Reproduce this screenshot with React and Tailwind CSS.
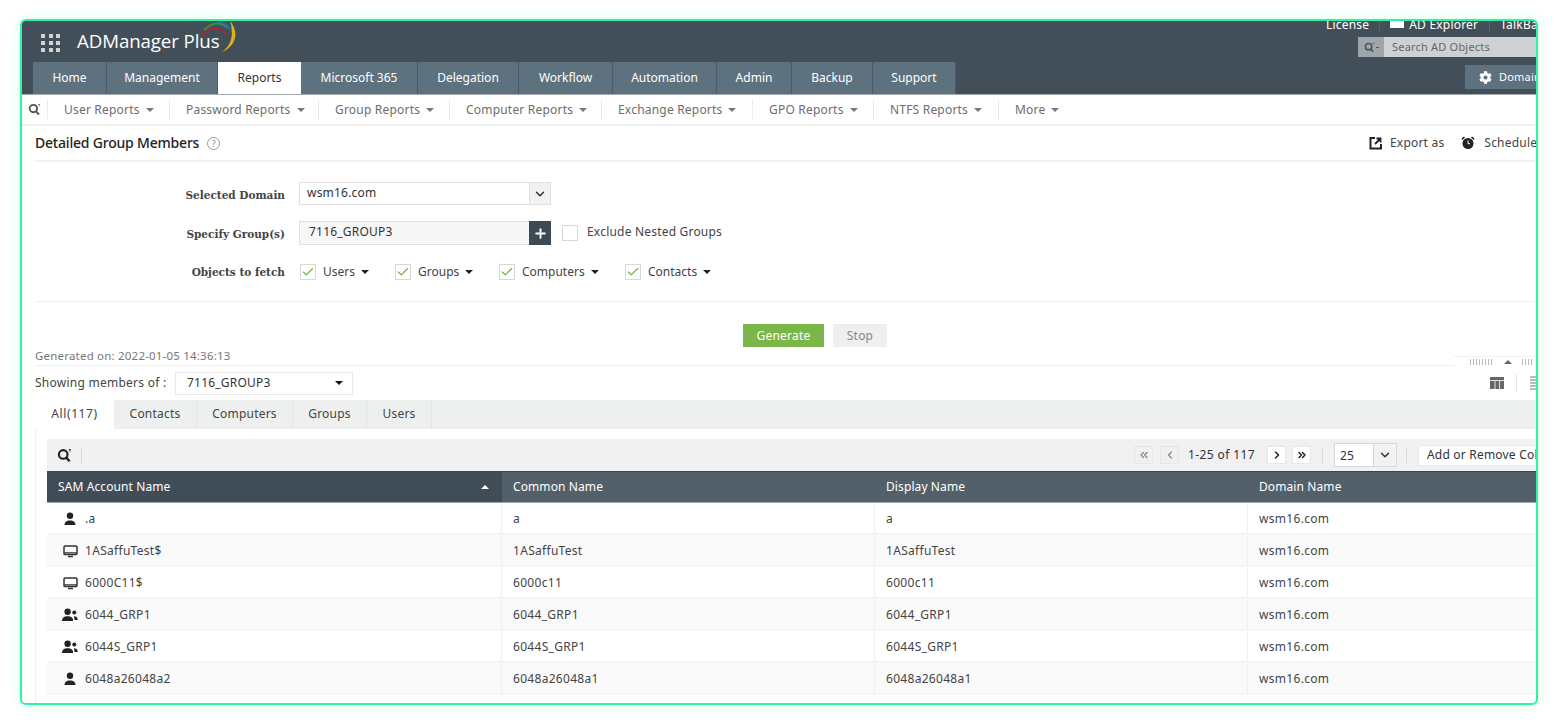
import { ChevronDown, ChevronLeft, ChevronRight, ChevronsLeft, ChevronsRight, Plus, Check } from "lucide-react";
import { FaCog } from "react-icons/fa";

const tabs = [
  { label: "Home", w: "w-[74px]" },
  { label: "Management", w: "w-[111px]" },
  { label: "Reports", w: "w-[83px]", active: true },
  { label: "Microsoft 365", w: "w-[117px]" },
  { label: "Delegation", w: "w-[101px]" },
  { label: "Workflow", w: "w-[94px]" },
  { label: "Automation", w: "w-[104px]" },
  { label: "Admin", w: "w-[75px]" },
  { label: "Backup", w: "w-[81px]" },
  { label: "Support", w: "w-[83px]" },
];

const subNav = [
  { label: "User Reports", w: "w-[122px]" },
  { label: "Password Reports", w: "w-[149px]" },
  { label: "Group Reports", w: "w-[131px]" },
  { label: "Computer Reports", w: "w-[152px]" },
  { label: "Exchange Reports", w: "w-[151px]" },
  { label: "GPO Reports", w: "w-[121px]" },
  { label: "NTFS Reports", w: "w-[125px]" },
  { label: "More", w: "w-[80px]" },
];

const fetchObjects = [
  { label: "Users", w: "w-[95px]" },
  { label: "Groups", w: "w-[104px]" },
  { label: "Computers", w: "w-[126px]" },
  { label: "Contacts", w: "w-[100px]" },
];

const resultTabs = [
  { label: "All(117)", w: "w-[79px]", active: true },
  { label: "Contacts", w: "w-[83px]" },
  { label: "Computers", w: "w-[96px]" },
  { label: "Groups", w: "w-[74px]" },
  { label: "Users", w: "w-[65px]" },
];

const rows = [
  { type: "user", sam: ".a", common: "a", display: "a" },
  { type: "pc", sam: "1ASaffuTest$", common: "1ASaffuTest", display: "1ASaffuTest" },
  { type: "pc", sam: "6000C11$", common: "6000c11", display: "6000c11" },
  { type: "group", sam: "6044_GRP1", common: "6044_GRP1", display: "6044_GRP1" },
  { type: "group", sam: "6044S_GRP1", common: "6044S_GRP1", display: "6044S_GRP1" },
  { type: "user", sam: "6048a26048a2", common: "6048a26048a1", display: "6048a26048a1" },
];

function Caret({ className = "" }) {
  return <span className={`inline-block w-0 h-0 border-x-[4px] border-x-transparent border-t-[4px] ${className}`} />;
}

function SearchIcon({ size = 14, color = "#333" }) {
  return (
    <svg className="shrink-0" width={size} height={size} viewBox="0 0 14 14" fill="none">
      <circle cx="5.8" cy="6" r="4" stroke={color} strokeWidth="2" />
      <path d="M8.6 9l3.2 3.4" stroke={color} strokeWidth="2.2" />
      <path d="M11 1.5h2M12 1.5v2" stroke={color} strokeWidth="0.8" />
    </svg>
  );
}

function RowIcon({ type }) {
  if (type === "user") {
    return (
      <svg width="14" height="14" viewBox="0 0 14 14" fill="#222">
        <circle cx="7" cy="3.8" r="3.2" />
        <path d="M1.500 13c0-3.400 2.500-4.600 5.500-4.600s5.500 1.200 5.500 4.600z" />
      </svg>
    );
  }
  if (type === "pc") {
    return (
      <svg width="15" height="14" viewBox="0 0 15 14" fill="none" stroke="#333">
        <rect x="1" y="2" width="13" height="8.600" rx="1.200" strokeWidth="1.500" />
        <path d="M1 8.800h13" strokeWidth="1.200" />
        <path d="M5 12.500h5" strokeWidth="1.400" />
      </svg>
    );
  }
  return (
    <svg width="16" height="14" viewBox="0 0 16 14" fill="#222">
      <circle cx="5.600" cy="3.800" r="3.200" />
      <path d="M0 13c0-3.400 2.500-4.700 5.600-4.700s5.600 1.300 5.600 4.700z" />
      <circle cx="12.300" cy="4.600" r="2" />
      <path d="M11.800 8.300c2.200 0 4 1 4 3.700h-3.300c0-1.400-.2-2.700-.7-3.700z" />
    </svg>
  );
}

function CheckBox({ checked }) {
  return (
    <span className="flex items-center justify-center w-[16px] h-[16px] shrink-0 bg-white border border-[#d8d8d8]">
      {checked && <Check size={14} strokeWidth={2} className="text-[#6db33f]" />}
    </span>
  );
}

function PageBtn({ children, dim }) {
  return (
    <span className={`flex items-center justify-center w-[19px] h-[18px] shrink-0 border border-[#e6e6e6] ${dim ? "bg-[#f0f0f0] text-[#888]" : "bg-white text-[#222]"}`}>
      {children}
    </span>
  );
}

function Cell({ children, w }) {
  return <div className={`${w} shrink-0 flex items-center px-[11px] border-r border-[#efefef]`}>{children}</div>;
}

export default function App() {
  return (
    <div className="w-[1557px] h-[724px] bg-white pl-[20px] pt-[19px] font-['Noto_Sans',sans-serif] text-[12px] tracking-[0.2px] text-[#444] overflow-hidden">
      <div className="w-[1518px] h-[686px] flex flex-col bg-white border-2 border-[#2ef3a0] rounded-[6px] overflow-hidden shadow-[0_0_14px_rgba(46,243,160,0.18)]">
        {/* dark header */}
        <header className="h-[74px] shrink-0 flex justify-between bg-[#434f58] border-b border-[#a3a9ad]">
          <div className="flex flex-col">
            <div className="h-[41px] flex items-center pl-[19px] pt-[2px]">
              <div className="grid grid-cols-3 gap-[3px] w-[20px]">
                {[0, 1, 2, 3, 4, 5, 6, 7, 8].map((i) => (
                  <span key={i} className="w-[4px] h-[4px] bg-[#cfd4d6]" />
                ))}
              </div>
              <div className="relative ml-[16px]">
                <span className="text-[18.700px] leading-none font-medium text-white font-['Open_Sans',sans-serif] tracking-[-0.1px]">ADManager Plus</span>
                <svg className="absolute left-[125px] top-[-11px]" width="36" height="34" viewBox="0 0 36 34" fill="none">
                  <path d="M1 14Q12 1 25 13" stroke="#a8233a" strokeWidth="2" />
                  <path d="M2 9Q14 -3 26 7" stroke="#3d8f3d" strokeWidth="2" />
                  <path d="M16 1Q25 1 30 11" stroke="#2569b0" strokeWidth="2" />
                  <path d="M28 0C37 10 35 25 20 31C30 24 32 12 28 0z" fill="#e0b010" />
                </svg>
              </div>
            </div>
            <nav className="flex pl-[11px] h-[32px] tracking-normal">
              {tabs.map((t) => (
                <div
                  key={t.label}
                  className={`${t.w} flex items-center justify-center ${t.active ? "bg-white text-[#333]" : "bg-[#5d717f] text-white border-r border-[#4b5c68]"}`}
                >
                  {t.label}
                </div>
              ))}
            </nav>
          </div>
          <div className="w-[210px] flex flex-col items-end overflow-hidden">
            <div className="h-[7px] w-full shrink-0 flex items-center text-[12px] leading-none text-white whitespace-nowrap">
              <span>License</span>
              <span className="w-px h-[14px] shrink-0 bg-[#566269] ml-[10px] mr-[10px]" />
              <span className="w-[14px] h-[7px] shrink-0 bg-white mr-[5px]" />
              <span>AD Explorer</span>
              <span className="w-px h-[14px] shrink-0 bg-[#566269] ml-[11px] mr-[10px]" />
              <span>TalkBack</span>
            </div>
            <div className="mt-[9px] w-[178px] h-[20px] shrink-0 flex bg-[#cdd1d3]">
              <div className="w-[26px] flex items-center justify-center gap-px bg-[#9ea6ab]">
                <SearchIcon size={11} color="#4b565d" />
                <span className="w-[3px] h-px bg-[#4b565d]" />
              </div>
              <span className="pl-[8px] text-[11px] leading-[20px] text-[#666] whitespace-nowrap">Search AD Objects</span>
            </div>
            <div className="mt-[8px] w-[71px] h-[24px] shrink-0 flex items-center pl-[14px] gap-[7px] bg-[#5d717f] text-white text-[11px] whitespace-nowrap overflow-hidden">
              <FaCog size={13} className="shrink-0 text-white" />
              Domain Settings
            </div>
          </div>
        </header>

        {/* report menu */}
        <div className="h-[31px] shrink-0 flex items-center pl-[6px] border-b-2 border-[#f0f0f0] text-[#6d6d6d]">
          <SearchIcon size={13} color="#555" />
          <div className="flex ml-[6px]">
            {subNav.map((item) => (
              <div key={item.label} className={`${item.w} h-[22px] flex items-center pl-[16px] gap-[6px] border-l border-[#ececec] whitespace-nowrap`}>
                {item.label}
                <Caret className="border-t-[#777]" />
              </div>
            ))}
          </div>
        </div>

        {/* title row */}
        <div className="h-[36px] shrink-0 ml-[13px] flex items-center justify-between border-b-2 border-[#f1f1f1]">
          <div className="flex items-center gap-[8px]">
            <h1 className="text-[14px] leading-none font-medium text-[#222] tracking-[-0.2px]">Detailed Group Members</h1>
            <span className="flex items-center justify-center w-[13px] h-[13px] rounded-full border border-[#999] text-[9px] leading-none text-[#888]">?</span>
          </div>
          <div className="w-[167px] flex items-center shrink-0 overflow-hidden whitespace-nowrap text-[#444]">
            <svg className="shrink-0" width="14" height="14" viewBox="0 0 14 14" fill="none" stroke="#222" strokeWidth="2">
              <path d="M6 2H1.500v10.500H12V8" />
              <path d="M6 8l5-5M7.500 2.500h4v4" strokeWidth="1.800" />
            </svg>
            <span className="ml-[7px]">Export as</span>
            <svg className="ml-[16px] shrink-0" width="16" height="16" viewBox="0 0 16 16" fill="#222">
              <circle cx="8" cy="8.500" r="5.500" />
              <path d="M1.500 3.500L4 1.500l1 1-2.500 2.500zM14.500 3.500L12 1.500l-1 1 2.500 2.500z" />
              <path d="M8 5.500v3.200h2" stroke="white" fill="none" />
            </svg>
            <span className="ml-[8px]">Schedule Reports</span>
          </div>
        </div>

        {/* filter form */}
        <div className="h-[140px] shrink-0 ml-[13px] pt-[20px] border-b border-[#efefef] font-['DejaVu_Sans',sans-serif] text-[11px]">
          <div className="flex items-center h-[23px]">
            <label className="w-[250px] pt-[4px] text-right font-['DejaVu_Serif',serif] font-bold tracking-normal text-[#444] text-[10.500px]">Selected Domain</label>
            <div className="ml-[14px] w-[252px] h-[23px] flex bg-white border border-[#e0e0e0]">
              <span className="flex-1 pl-[7px] leading-[19px] font-['Noto_Sans',sans-serif] text-[12px] text-[#333]">wsm16.com</span>
              <span className="w-[21px] flex items-center justify-center bg-[#f2f2f2] border-l border-[#e0e0e0]">
                <ChevronDown size={14} strokeWidth={2.5} className="text-[#333]" />
              </span>
            </div>
          </div>
          <div className="flex items-center h-[24px] mt-[16px]">
            <label className="w-[250px] pt-[4px] text-right font-['DejaVu_Serif',serif] font-bold tracking-normal text-[#444] text-[10.500px]">Specify Group(s)</label>
            <div className="ml-[14px] w-[252px] h-[24px] flex bg-[#f7f7f7] border border-[#e0e0e0]">
              <span className="flex-1 pl-[9px] leading-[20px] font-['Noto_Sans',sans-serif] text-[12px] text-[#333]">7116_GROUP3</span>
              <span className="w-[22px] -m-px flex items-center justify-center bg-[#3d4a53]">
                <Plus size={15} strokeWidth={3} className="text-white" />
              </span>
            </div>
            <span className="ml-[11px]"><CheckBox /></span>
            <span className="ml-[9px] -mt-[2px] font-['Noto_Sans',sans-serif] text-[12px] text-[#444]">Exclude Nested Groups</span>
          </div>
          <div className="flex items-center h-[18px] mt-[18px]">
            <label className="w-[250px] pt-[2px] text-right font-['DejaVu_Serif',serif] font-bold tracking-normal text-[#444] text-[10.500px]">Objects to fetch</label>
            <div className="ml-[15px] flex">
              {fetchObjects.map((o) => (
                <div key={o.label} className={`${o.w} flex items-center font-['Noto_Sans',sans-serif] tracking-normal text-[12px] text-[#444]`}>
                  <CheckBox checked />
                  <span className="ml-[7px]">{o.label}</span>
                  <Caret className="ml-[6px] border-t-[#222]" />
                </div>
              ))}
            </div>
          </div>
        </div>

        {/* actions */}
        <div className="h-[23px] shrink-0 mt-[22px] flex justify-center gap-[9px] pl-[72px] text-[12px]">
          <button className="w-[81px] bg-[#7ab648] text-white">Generate</button>
          <button className="w-[54px] bg-[#efefef] text-[#888]">Stop</button>
        </div>

        <div className="relative h-[19px] shrink-0 ml-[13px] flex items-center border-b border-[#efefef] text-[11.500px] tracking-[0.2px] text-[#777]">
          Generated on: 2022-01-05 14:36:13
          <div className="absolute right-0 bottom-[-1px] w-[82px] h-[10px] flex items-center gap-[10px] pl-[16px] bg-white border-t border-[#efefef]">
            <span className="w-[24px] h-[6px] bg-[repeating-linear-gradient(90deg,#bbb_0,#bbb_1px,transparent_1px,transparent_3px)]" />
            <span className="w-0 h-0 border-x-[4px] border-x-transparent border-b-[4px] border-b-[#666]" />
            <span className="w-[12px] h-[6px] bg-[repeating-linear-gradient(90deg,#bbb_0,#bbb_1px,transparent_1px,transparent_3px)]" />
          </div>
        </div>

        {/* member select */}
        <div className="h-[34px] shrink-0 ml-[13px] flex items-center justify-between">
          <div className="flex items-center">
            <span className="w-[140px] tracking-[0.25px] text-[#444] whitespace-nowrap">Showing members of :</span>
            <div className="w-[178px] h-[23px] flex items-center justify-between pl-[11px] pr-[9px] bg-white border border-[#e8e8e8] text-[#333]">
              7116_GROUP3
              <Caret className="border-t-[#111]" />
            </div>
          </div>
          <div className="w-[47px] flex items-center shrink-0 overflow-hidden">
            <svg className="shrink-0" width="16" height="14" viewBox="0 0 16 14" fill="#666">
              <path d="M1 1h14v12H1z" />
              <path d="M1 4.500h14M6 4.500V13M10.500 4.500V13" stroke="white" strokeWidth="0.800" />
            </svg>
            <span className="w-px h-[18px] shrink-0 ml-[11px] bg-[#e4e4e4]" />
            <span className="ml-[13px] w-[6px] h-[14px] shrink-0 bg-[repeating-linear-gradient(0deg,#bbb_0,#bbb_2px,transparent_2px,transparent_3px)]" />
          </div>
        </div>

        {/* result tabs */}
        <div className="h-[29px] shrink-0 ml-[13px] flex bg-[#eef0f0] text-[#444]">
          {resultTabs.map((t) => (
            <div
              key={t.label}
              className={`${t.w} pb-[2px] flex items-center justify-center ${t.active ? "bg-white tracking-[0.6px]" : "border-r border-[#e3e5e5]"}`}
            >
              {t.label}
            </div>
          ))}
        </div>

        {/* grid */}
        <div className="flex-1 min-h-0 ml-[13px] pl-[11px] pt-[10px] border-l border-[#efefef]">
          <div className="h-[32px] flex items-center justify-between bg-[#f1f1f1]">
            <div className="flex items-center pl-[10px]">
              <SearchIcon size={15} color="#222" />
              <span className="w-px h-[17px] ml-[9px] bg-[#d8d8d8]" />
            </div>
            <div className="w-[402px] flex items-center shrink-0 overflow-hidden whitespace-nowrap">
              <PageBtn dim><ChevronsLeft size={12} strokeWidth={2.500} /></PageBtn>
              <span className="ml-[7px]"><PageBtn dim><ChevronLeft size={12} strokeWidth={2.500} /></PageBtn></span>
              <span className="w-[70px] shrink-0 ml-[9px] tracking-[0.4px] text-[#333]">1-25 of 117</span>
              <span className="ml-[9px]"><PageBtn><ChevronRight size={12} strokeWidth={3} /></PageBtn></span>
              <span className="ml-[6px]"><PageBtn><ChevronsRight size={12} strokeWidth={3} /></PageBtn></span>
              <span className="w-px h-[16px] shrink-0 ml-[11px] bg-[#d8d8d8]" />
              <div className="ml-[11px] w-[63px] h-[24px] shrink-0 flex bg-white border border-[#d8d8d8]">
                <span className="flex-1 pl-[5px] leading-[24px] text-[#333]">25</span>
                <span className="w-[23px] flex items-center justify-center bg-[#f2f2f2] border-l border-[#d8d8d8]">
                  <ChevronDown size={14} strokeWidth={2.500} className="text-[#333]" />
                </span>
              </div>
              <span className="w-px h-[16px] shrink-0 ml-[9px] bg-[#d8d8d8]" />
              <span className="ml-[11px] h-[21px] px-[8px] flex items-center bg-white border border-[#e8e8e8] text-[#333]">Add or Remove Columns</span>
            </div>
          </div>

          <div className="h-[32px] flex bg-[#53606a] text-white tracking-[0.1px] border-t border-[#3a464e] border-b border-b-[#a0a7ab]">
            <div className="w-[455px] shrink-0 flex items-center justify-between pl-[11px] pr-[13px] bg-[#414d56]">
              SAM Account Name
              <span className="w-0 h-0 border-x-[4px] border-x-transparent border-b-[4px] border-b-white" />
            </div>
            <div className="w-[373px] shrink-0 flex items-center px-[11px]">Common Name</div>
            <div className="w-[373px] shrink-0 flex items-center px-[11px]">Display Name</div>
            <div className="flex-1 flex items-center px-[11px]">Domain Name</div>
          </div>

          {rows.map((r, i) => (
            <div key={r.sam} className={`h-[32px] flex pt-[1px] border-b-2 border-[#f5f5f5] tracking-[0.3px] text-[#444] ${i % 2 ? "bg-[#fafafa]" : "bg-white"}`}>
              <Cell w="w-[455px]">
                <span className="w-[16px] flex justify-center ml-[4px]"><RowIcon type={r.type} /></span>
                <span className="ml-[7px]">{r.sam}</span>
              </Cell>
              <Cell w="w-[373px]">{r.common}</Cell>
              <Cell w="w-[373px]">{r.display}</Cell>
              <div className="flex-1 flex items-center px-[11px]">wsm16.com</div>
            </div>
          ))}
        </div>
      </div>
    </div>
  );
}
